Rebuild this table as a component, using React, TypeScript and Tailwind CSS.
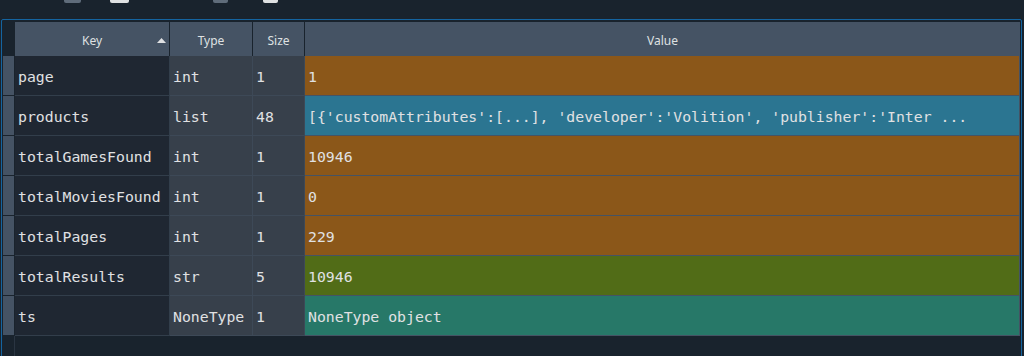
import React from "react";

type Row = {
  key: string;
  type: string;
  size: string;
  value: string;
  color: string;
};

const ROWS: Row[] = [
  { key: "page", type: "int", size: "1", value: "1", color: "bg-[#8b5719]" },
  {
    key: "products",
    type: "list",
    size: "48",
    value:
      "[{'customAttributes':[...], 'developer':'Volition', 'publisher':'Inter ...",
    color: "bg-[#2b7591]",
  },
  { key: "totalGamesFound", type: "int", size: "1", value: "10946", color: "bg-[#8b5719]" },
  { key: "totalMoviesFound", type: "int", size: "1", value: "0", color: "bg-[#8b5719]" },
  { key: "totalPages", type: "int", size: "1", value: "229", color: "bg-[#8b5719]" },
  { key: "totalResults", type: "str", size: "5", value: "10946", color: "bg-[#516c17]" },
  { key: "ts", type: "NoneType", size: "1", value: "NoneType object", color: "bg-[#277868]" },
];

const mono = "font-['DejaVu_Sans_Mono',monospace] text-[14.8px] text-[#e0e1e3] pt-[3px]";

const HeaderCell = ({ label, sort = false }: { label: string; sort?: boolean }) => (
  <div className="relative flex h-[34px] items-center justify-center border-r border-[#19232d] bg-[#455364] font-['Noto_Sans',sans-serif] text-[12px] text-[#dfe1e2]">
    <span className="mt-[3px]">{label}</span>
    {sort && (
      <svg
        className="absolute right-[3px] top-[16px]"
        width="9"
        height="5"
        viewBox="0 0 9 5"
      >
        <path d="M0 5 L4.5 0 L9 5 Z" fill="#e0e1e3" />
      </svg>
    )}
  </div>
);

export default function App() {
  return (
    <div className="h-[356px] w-[1024px] overflow-hidden bg-[#19232d]">
      {/* toolbar remnants */}
      <div className="relative h-[19px]">
        <div className="absolute left-[64px] top-0 h-[3px] w-[17px] rounded-b-[2px] bg-[#5f6c7a]" />
        <div className="absolute left-[110px] top-0 h-[3px] w-[19px] rounded-b-[2px] bg-[#dfe1e2]" />
        <div className="absolute left-[213px] top-0 h-[3px] w-[15px] rounded-b-[2px] bg-[#5f6c7a]" />
        <div className="absolute left-[263px] top-0 h-[3px] w-[15px] rounded-b-[2px] bg-[#dfe1e2]" />
      </div>

      {/* table frame */}
      <div className="ml-[1px] h-[340px] w-[1021px] rounded-[2px] border border-[#1464a0] pl-[1px] pr-[1px] pt-[2px]">
        <div className="grid grid-cols-[12px_155px_83px_52px_1fr]">
          <div className="h-[34px] border-r border-[#19232d] bg-[#19232d]" />
          <HeaderCell label="Key" sort />
          <HeaderCell label="Type" />
          <HeaderCell label="Size" />
          <div className="flex h-[34px] items-center justify-center bg-[#455364] font-['Noto_Sans',sans-serif] text-[12px] text-[#dfe1e2]">
            <span className="mt-[3px]">Value</span>
          </div>

          {ROWS.map((row) => (
            <React.Fragment key={row.key}>
              <div className="h-[40px] border-b border-r border-[#19232d] bg-[#455364]" />
              <div
                className={`flex h-[40px] items-center border-b border-r border-[#323e4b] bg-[#1f2732] pl-[3px] ${mono}`}
              >
                {row.key}
              </div>
              <div
                className={`flex h-[40px] items-center border-b border-r border-[#3d4957] bg-[#37404b] pl-[3px] ${mono}`}
              >
                {row.type}
              </div>
              <div
                className={`flex h-[40px] items-center border-b border-r border-[#3d4957] bg-[#37404b] pl-[3px] ${mono}`}
              >
                {row.size}
              </div>
              <div
                className={`flex h-[40px] items-center whitespace-pre border-b border-r border-[#455364] pl-[3px] ${row.color} ${mono}`}
              >
                {row.value}
              </div>
            </React.Fragment>
          ))}

          <div className="h-[30px] border-r border-[#2a3542]" />
        </div>
      </div>
    </div>
  );
}
